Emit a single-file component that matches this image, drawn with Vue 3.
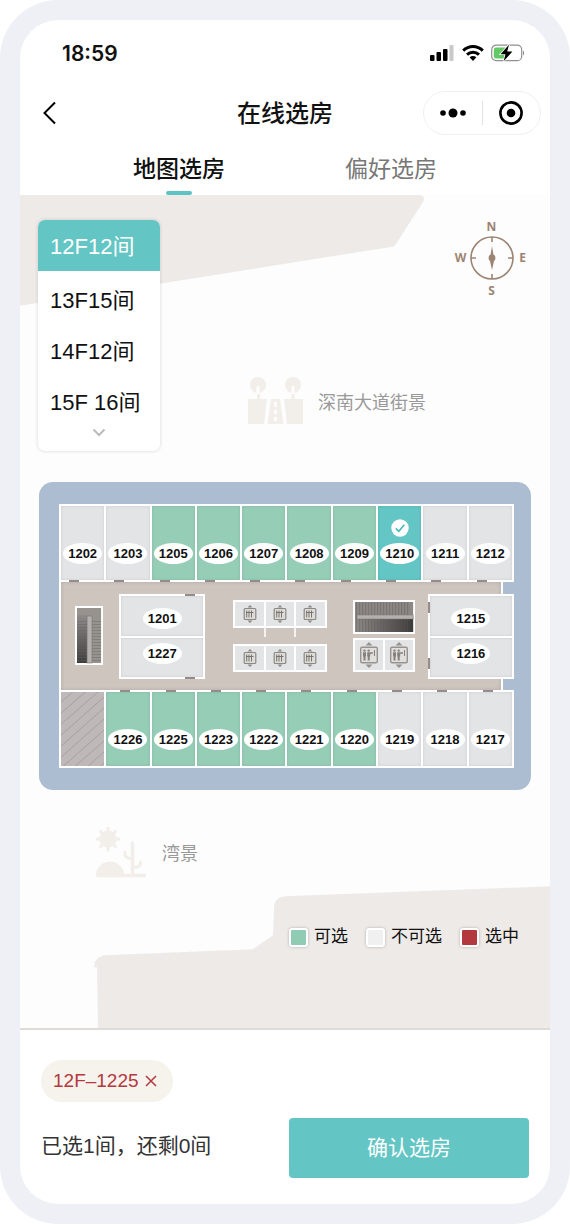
<script setup>
import { ref } from 'vue'

const tabs = ['地图选房', '偏好选房']
const activeTab = ref(0)

const floors = ['12F12间', '13F15间', '14F12间', '15F 16间']
const activeFloor = ref(0)

const topRooms = [
  { no: '1202', state: 'off' },
  { no: '1203', state: 'off' },
  { no: '1205', state: 'free' },
  { no: '1206', state: 'free' },
  { no: '1207', state: 'free' },
  { no: '1208', state: 'free' },
  { no: '1209', state: 'free' },
  { no: '1210', state: 'picked' },
  { no: '1211', state: 'off' },
  { no: '1212', state: 'off' },
]
const bottomRooms = [
  { no: '1226', state: 'free' },
  { no: '1225', state: 'free' },
  { no: '1223', state: 'free' },
  { no: '1222', state: 'free' },
  { no: '1221', state: 'free' },
  { no: '1220', state: 'free' },
  { no: '1219', state: 'off' },
  { no: '1218', state: 'off' },
  { no: '1217', state: 'off' },
]

const legend = [
  { label: '可选', kind: 'free' },
  { label: '不可选', kind: 'off' },
  { label: '选中', kind: 'chosen' },
]
</script>

<template>
  <div class="frame">
    <main class="screen">
      <div class="status">
        <span class="time">18:59</span>
        <div class="status-icons">
          <svg width="25" height="18" viewBox="0 0 25 18" aria-hidden="true">
            <rect x="0" y="11" width="4.500" height="6" rx="1" />
            <rect x="6.500" y="8" width="4.500" height="9" rx="1" />
            <rect x="13" y="5" width="4.500" height="12" rx="1" />
            <rect x="19.500" y="1" width="4" height="16" rx="1" fill="#c9c9c9" />
          </svg>
          <svg width="22" height="18" viewBox="0 0 22 18" aria-hidden="true">
            <g fill="none" stroke="#000" stroke-width="3">
              <path d="M1.2 6.6C6.8 1.1 15.200 1.1 20.800 6.6" />
              <path d="M5 10.600C8.500 7.300 13.500 7.300 17 10.600" />
            </g>
            <path d="M7.600 13.300C9.600 11.500 12.400 11.500 14.400 13.300L11 17Z" />
          </svg>
          <svg width="34" height="18" viewBox="0 0 34 18" aria-hidden="true">
            <rect x="0.700" y="1.200" width="30" height="15.500" rx="4.500" fill="#fff" stroke="#8f8f8f" stroke-width="1.200" />
            <path d="M5 3.500H15V14.500H5A2.200 2.200 0 0 1 2.800 12.300V5.700A2.200 2.200 0 0 1 5 3.500Z" fill="#62c964" />
            <path d="M32 6.500C33.600 7.500 33.600 10.500 32 11.500Z" fill="#8f8f8f" />
            <path d="M18 0.800L9.500 10.200H14.500L12.600 17.200L21.400 7.600H16.200Z" stroke="#fff" stroke-width="1.600" paint-order="stroke" />
          </svg>
        </div>
      </div>

      <header class="nav">
        <button class="back" type="button" aria-label="返回">
          <svg width="16" height="24" viewBox="0 0 16 24">
            <path d="M14 1.500L3.500 12L14 22.500" fill="none" stroke="#000" stroke-width="2" />
          </svg>
        </button>
        <h1>在线选房</h1>
        <div class="capsule">
          <button type="button" aria-label="更多">
            <svg width="28" height="10" viewBox="0 0 28 10">
              <circle cx="4" cy="5" r="2.800" /><circle cx="14" cy="5" r="4.500" /><circle cx="24" cy="5" r="2.800" />
            </svg>
          </button>
          <button type="button" aria-label="关闭">
            <svg width="24" height="24" viewBox="0 0 24 24">
              <circle cx="12" cy="12" r="10.600" fill="none" stroke="#000" stroke-width="2.600" />
              <circle cx="12" cy="12" r="4.300" />
            </svg>
          </button>
        </div>
      </header>

      <nav class="tabs">
        <button
          v-for="(tab, i) in tabs"
          :key="tab"
          type="button"
          class="tab"
          :class="{ active: i === activeTab }"
          @click="activeTab = i"
        >{{ tab }}</button>
      </nav>

      <section class="map">
        <svg class="terrain" viewBox="0 0 530 835" preserveAspectRatio="none" aria-hidden="true">
          <path d="M0 0H400Q406 1 403 7L376 49Q375 52 371 52L265 69L0 111Z" />
          <path d="M77 774H74Q74 765 84 762L233 756L253 742L254 715Q254 704 265 703L530 693V835H78Z" />
        </svg>

        <div class="upper">
          <div class="floors">
            <button
              v-for="(floor, i) in floors"
              :key="floor"
              type="button"
              class="floor"
              :class="{ active: i === activeFloor }"
              @click="activeFloor = i"
            >{{ floor }}</button>
            <button class="more" type="button" aria-label="更多楼层">
              <svg width="14" height="9" viewBox="0 0 14 9">
                <path d="M1.500 1.500L7 7L12.500 1.500" fill="none" stroke="#bbb" stroke-width="2" />
              </svg>
            </button>
          </div>

          <div class="landmark street">
            <svg width="55" height="50" viewBox="0 0 55 50" aria-hidden="true">
              <g fill="#f2eeea">
                <circle cx="10" cy="9" r="8" /><circle cx="45" cy="9" r="8" />
                <path d="M0 23H19L16 48H0ZM36 23H55V48H39ZM23 23H32L35.500 48H19.500Z" />
                <rect x="9" y="16" width="3" height="8" /><rect x="43.500" y="16" width="3" height="8" />
              </g>
              <g fill="#fdfdfd">
                <rect x="8.500" y="10" width="3" height="8" rx="1" /><rect x="43.500" y="10" width="3" height="8" rx="1" />
                <rect x="26" y="26" width="3" height="5" /><rect x="26" y="34" width="3" height="4" /><rect x="26" y="41" width="3" height="4" />
              </g>
            </svg>
            <span>深南大道街景</span>
          </div>

          <svg class="compass" width="76" height="86" viewBox="-2 -5 76 86" role="img" aria-label="指南针">
            <g fill="none" stroke="#9c8473" stroke-width="1.600">
              <circle cx="37" cy="37" r="21" />
              <path d="M37 16V21M37 53V58M16 37H21M53 37H58" />
            </g>
            <path d="M37 25L38.500 34L39 40L37 49L35 40L35.500 34Z" />
            <circle cx="37" cy="37" r="3.400" />
            <text x="36.500" y="10">N</text>
            <text x="36.500" y="74">S</text>
            <text x="5.500" y="41">W</text>
            <text x="67.500" y="41">E</text>
          </svg>
        </div>

        <div class="plan">
          <div class="strip">
            <button v-for="room in topRooms" :key="room.no" type="button" class="room door-low" :class="room.state">
              <svg v-if="room.state === 'picked'" class="tick" width="18" height="18" viewBox="0 0 18 18" aria-hidden="true">
                <circle cx="9" cy="9" r="8.700" fill="#fff" />
                <path d="M4.800 9.300L7.800 12.300L13.300 5.700" fill="none" stroke="#4bb9b9" stroke-width="1.700" />
              </svg>
              <span class="no">{{ room.no }}</span>
            </button>
          </div>

          <div class="corridor">
            <div class="core">
              <svg class="stairs tall" viewBox="0 0 28 59" preserveAspectRatio="none" aria-hidden="true">
                <defs>
                  <linearGradient id="wellA" x1="0" y1="0" x2="0" y2="1">
                    <stop offset="0" stop-color="#8f8b89" /><stop offset="1" stop-color="#3e3d3d" />
                  </linearGradient>
                  <pattern id="stepA" width="28" height="3" patternUnits="userSpaceOnUse">
                    <rect width="28" height="1" fill="#625e5b" opacity=".4" />
                  </pattern>
                </defs>
                <rect width="28" height="59" fill="#fff" />
                <rect x="2" y="2" width="24" height="55" fill="#98928e" />
                <rect x="2" y="9" width="11" height="48" fill="url(#wellA)" />
                <rect x="2" y="14" width="24" height="43" fill="url(#stepA)" />
                <rect x="12" y="10" width="5" height="47" fill="#b4b0ad" stroke="#77736f" stroke-width=".6" />
              </svg>

              <div class="pair west">
                <button type="button" class="room off door-up"><span class="no">1201</span></button>
                <button type="button" class="room off door-down"><span class="no">1227</span></button>
              </div>

              <div class="lifts">
                <div v-for="bank in 2" :key="bank" class="bank">
                  <div v-for="n in 3" :key="n" class="lift">
                    <svg width="14" height="18" viewBox="0 0 14 18" aria-hidden="true">
                      <path d="M7 0L9.500 2.500H4.500ZM7 18L4.500 15.500H9.500Z" fill="#8c8984" />
                      <rect x="1.200" y="3.500" width="11.600" height="11" rx="1" fill="#dedcd8" stroke="#8c8984" stroke-width="1.200" />
                      <path d="M3.700 5.500V12.500M6 5.500V12.500M3 7.500H10.500M8.500 5.500V12.500" stroke="#77746f" fill="none" />
                    </svg>
                  </div>
                </div>
              </div>

              <div class="service">
                <svg class="stairs wide" viewBox="0 0 62 34" preserveAspectRatio="none" aria-hidden="true">
                  <defs>
                    <linearGradient id="wellB" x1="0" y1="0" x2="1" y2="0">
                      <stop offset="0" stop-color="#8f8a87" /><stop offset="1" stop-color="#3c3b3b" />
                    </linearGradient>
                    <pattern id="stepB" width="3" height="34" patternUnits="userSpaceOnUse">
                      <rect width="1" height="34" fill="#5c5855" opacity=".4" />
                    </pattern>
                  </defs>
                  <rect width="62" height="34" fill="#fff" />
                  <rect x="2" y="2" width="58" height="30" fill="#8c8784" />
                  <rect x="2" y="18" width="58" height="14" fill="url(#wellB)" />
                  <rect x="2" y="2" width="54" height="30" fill="url(#stepB)" />
                  <rect x="4" y="15" width="56" height="4" fill="#b4b0ad" stroke="#77736f" stroke-width=".5" />
                </svg>
                <div class="bank">
                  <div v-for="n in 2" :key="n" class="lift big">
                    <svg width="20" height="26" viewBox="0 0 20 26" aria-hidden="true">
                      <path d="M10 0L13.500 3.500H6.500ZM10 26L6.500 22.500H13.500Z" fill="#96938e" />
                      <rect x="1.700" y="5.200" width="16.600" height="15.500" rx="1.500" fill="#e0dfdc" stroke="#96938e" stroke-width="1.400" />
                      <g fill="#85827d">
                        <circle cx="5.500" cy="8.600" r="1.200" /><path d="M4 10.300H7V14.500H6.500V18.500H4.500V14.500H4Z" />
                        <circle cx="9.700" cy="8.600" r="1.200" /><path d="M8.200 10.300H14V11.700H11.200V14.500H10.700V18.500H8.700V14.500H8.200Z" />
                        <rect x="15" y="8" width="1" height="6" />
                      </g>
                    </svg>
                  </div>
                </div>
              </div>

              <div class="pair east">
                <button type="button" class="room off door-left-up"><span class="no">1215</span></button>
                <button type="button" class="room off door-left-down"><span class="no">1216</span></button>
              </div>
            </div>
          </div>

          <div class="strip">
            <svg class="deck" viewBox="0 0 44 74" preserveAspectRatio="none" aria-hidden="true">
              <rect width="44" height="74" fill="#bfb8b9" />
              <path
                d="M-2 12L14 -2M-2 23L27 -2M-2 34L40 -2M-2 45L46 3M-2 56L46 14M-2 67L46 25M-2 78L46 36M10 78L46 47M23 78L46 58M36 78L46 69"
                fill="none"
                stroke="#a69fa2"
              />
            </svg>
            <button v-for="room in bottomRooms" :key="room.no" type="button" class="room door-high" :class="room.state">
              <span class="no">{{ room.no }}</span>
            </button>
          </div>
        </div>

        <div class="landmark bay">
          <svg width="52" height="52" viewBox="0 0 52 52" aria-hidden="true">
            <g fill="#f2eeea" stroke="#f2eeea" stroke-linecap="round">
              <circle cx="13" cy="13" r="8" />
              <path d="M13 2V24M2 13H24M5.500 5.500L20.500 20.500M20.500 5.500L5.500 20.500" stroke-width="3" />
              <path d="M1 49C1 42 7 35.500 15 35.500S29 42 29 49Z" stroke="none" />
              <path d="M2.500 49.500H49.500M37.500 17V49" stroke-width="3.500" fill="none" />
              <path d="M30 26V28Q30 32.500 37 32.500M45.500 36V37Q45.500 41.500 38 41.500" stroke-width="3" fill="none" />
            </g>
          </svg>
          <span>湾景</span>
        </div>

        <ul class="legend">
          <li v-for="item in legend" :key="item.label">
            <i class="swatch" :class="item.kind"></i>{{ item.label }}
          </li>
        </ul>
      </section>

      <footer class="footer">
        <div class="chip">
          <span>12F–1225</span>
          <button type="button" aria-label="移除 12F–1225">
            <svg width="12" height="12" viewBox="0 0 12 12">
              <path d="M1 1L11 11M11 1L1 11" stroke="#b3393f" stroke-width="1.500" />
            </svg>
          </button>
        </div>
        <div class="submit">
          <p>已选1间，还剩0间</p>
          <button class="confirm" type="button">确认选房</button>
        </div>
      </footer>
    </main>
  </div>
</template>

<style>
body {
  background: #fff;
}
</style>

<style scoped>
* {
  box-sizing: border-box;
}
.frame {
  padding: 20px;
  border-radius: 58px;
  background: #eff0f5;
  font-family: "Liberation Sans", "Noto Sans CJK SC", sans-serif;
  color: #111;
}
button {
  margin: 0;
  padding: 0;
  border: 0;
  background: none;
  font: inherit;
  color: inherit;
  cursor: pointer;
}
svg {
  display: block;
}
.screen {
  overflow: hidden;
  border-radius: 38px;
  background: #fff;
}

.status {
  display: flex;
  align-items: center;
  justify-content: space-between;
  height: 66px;
  padding: 0 25px 0 42px;
}
.time {
  font: 600 21px "Inter", sans-serif;
}
.status-icons {
  display: flex;
  gap: 7px;
}

.nav {
  display: grid;
  grid-template-columns: 1fr auto 1fr;
  align-items: center;
  height: 54px;
  padding: 0 9px;
}
.back {
  justify-self: start;
  margin-left: 12px;
}
h1 {
  margin: 0;
  padding-top: 2px;
  font-size: 24px;
  line-height: 32px;
  font-weight: 500;
}
.capsule {
  display: flex;
  justify-self: end;
  width: 118px;
  height: 44px;
  padding: 9px 0;
  border: 1px solid #efefef;
  border-radius: 22px;
}
.capsule button {
  flex: 1;
  display: flex;
  align-items: center;
  justify-content: center;
}
.capsule button + button {
  border-left: 1px solid #e2e2e2;
}

.tabs {
  display: flex;
  height: 55px;
  padding: 0 53px;
}
.tab {
  position: relative;
  flex: 1;
  padding-bottom: 2px;
  font-size: 23px;
  color: #777;
}
.tab.active {
  font-weight: 500;
  color: #111;
}
.tab.active::after {
  content: "";
  position: absolute;
  left: 50%;
  bottom: 0;
  width: 26px;
  height: 4px;
  margin-left: -13px;
  border-radius: 2px;
  background: #5cc4c4;
}

.map {
  position: relative;
  padding: 25px 19px 79px 18px;
  background: #fdfdfd;
  border-bottom: 2px solid #dfdbd8;
}
.terrain {
  position: absolute;
  inset: 0;
  width: 100%;
  height: 100%;
  fill: #eeeae7;
}
.upper,
.plan,
.landmark,
.legend {
  position: relative;
}
.upper {
  display: flex;
  align-items: flex-start;
}
.floors {
  display: flex;
  flex-direction: column;
  width: 122px;
  overflow: hidden;
  border-radius: 7px;
  background: #fff;
  box-shadow: 0 0 3px 1px #00000018;
}
.floor {
  height: 51px;
  padding: 0 0 6px 12px;
  font-size: 22px;
  text-align: left;
  white-space: nowrap;
}
.floor.active {
  margin-bottom: 4px;
  padding-bottom: 4px;
  background: #63c5c4;
  color: #fff;
}
.more {
  display: flex;
  justify-content: center;
  height: 23px;
}
.landmark {
  display: flex;
  align-items: center;
  gap: 15px;
  font-size: 18px;
  color: #999;
}
.street {
  align-self: flex-end;
  margin: 0 0 25px 88px;
}
.compass {
  margin: -4px 2px 0 auto;
  fill: #9c8473;
  font: 700 12px "Noto Sans", sans-serif;
  text-anchor: middle;
}

.plan {
  margin: 31px 0 0 1px;
  padding: 22px 17px 22px 20px;
  border-radius: 14px;
  background: #adbdd1;
}
.strip {
  display: grid;
  grid-template-columns: repeat(10, 1fr);
  gap: 2px;
  height: 78px;
  padding: 2px;
  background: #fff;
}
.room {
  position: relative;
  display: flex;
  flex-direction: column;
  align-items: center;
  justify-content: flex-end;
  gap: 6px;
  padding-bottom: 16px;
  box-shadow: inset 0 0 3px #0000001c;
}
.room.off {
  background: #e3e4e6;
}
.room.free {
  background: #95cdb6;
}
.room.picked {
  background: #63c5c4;
}
.no {
  width: 39px;
  border-radius: 50%;
  background: #fff;
  color: #111;
  font-size: 13px;
  line-height: 21px;
  font-weight: 700;
  text-align: center;
}
.room::after {
  content: "";
  position: absolute;
  width: 10px;
  height: 2px;
  background: #948c88;
}
.door-low::after {
  left: 8px;
  bottom: -2px;
}
.door-high::after {
  left: 14px;
  top: -2px;
}
.door-up::after {
  right: 8px;
  top: -2px;
}
.door-down::after {
  right: 8px;
  bottom: -2px;
}
.door-left-up::after,
.door-left-down::after {
  left: -2px;
  width: 2px;
  height: 11px;
}
.door-left-up::after {
  top: 6px;
}
.door-left-down::after {
  bottom: 8px;
}
.corridor {
  height: 108px;
  margin-right: 11px;
  border: 2px solid #fff;
  border-width: 0 2px;
  background: #cec5bf;
  box-shadow: inset 0 0 4px #00000022;
}
.core {
  display: grid;
  grid-template-columns: 14fr 28fr 16fr 86fr 28fr 93fr 26fr 62fr 13fr 86fr;
  align-items: start;
  margin-right: -13px;
}
.tall {
  grid-column: 2;
  width: 100%;
  height: 59px;
  margin-top: 24px;
}
.pair {
  display: grid;
  grid-template-rows: 1fr 1fr;
  gap: 2px;
  height: 85px;
  margin-top: 12px;
  padding: 2px;
  background: #fff;
}
.pair .room {
  padding-bottom: 7px;
}
.pair .room + .room {
  padding-bottom: 13px;
}
.west {
  grid-column: 4;
}
.east {
  grid-column: 10;
}
.lifts {
  grid-column: 6;
  display: grid;
  gap: 16px;
  margin-top: 18px;
}
.bank {
  display: flex;
  gap: 2px;
  padding: 2px;
  background: #fff;
}
.lift {
  position: relative;
  flex: 1;
  display: flex;
  align-items: center;
  justify-content: center;
  height: 24px;
  background: #e3e4e6;
}
.lifts .bank:first-child .lift + .lift::after {
  content: "";
  position: absolute;
  left: -2px;
  top: 26px;
  width: 2px;
  height: 9px;
  background: #f4f2f0;
}
.service {
  grid-column: 8;
  display: grid;
  gap: 4px;
  margin-top: 18px;
}
.wide {
  width: 100%;
  height: 34px;
}
.lift.big {
  height: 30px;
}
.deck {
  width: 100%;
  height: 100%;
}

.bay {
  margin: 36px 0 0 57px;
}
.legend {
  display: flex;
  justify-content: flex-end;
  gap: 18px;
  margin: 47px 12px 0 0;
  padding: 0;
  list-style: none;
  font-size: 17px;
  line-height: 24px;
}
.legend li {
  display: flex;
  align-items: center;
  gap: 6px;
}
.swatch {
  width: 19px;
  height: 19px;
  border: 2px solid #fff;
  border-radius: 3px;
  box-shadow: 0 0 3px #00000044;
}
.swatch.free {
  background: #8fccb3;
}
.swatch.off {
  background: #f0f0f0;
}
.swatch.chosen {
  background: #b3393f;
}

.footer {
  padding: 30px 21px 26px;
}
.chip {
  display: inline-flex;
  align-items: center;
  gap: 6px;
  height: 42px;
  padding: 0 16px 0 12px;
  border-radius: 21px;
  background: #f6f2ec;
  color: #b3393f;
  font-size: 19px;
}
.submit {
  display: flex;
  align-items: center;
  justify-content: space-between;
  margin-top: 16px;
}
.submit p {
  margin: 0;
  padding-bottom: 4px;
  font-size: 21px;
  line-height: 32px;
  color: #333;
}
.confirm {
  width: 240px;
  height: 60px;
  padding-bottom: 4px;
  border-radius: 4px;
  background: #63c5c4;
  color: #fff;
  font-size: 21px;
}
</style>
